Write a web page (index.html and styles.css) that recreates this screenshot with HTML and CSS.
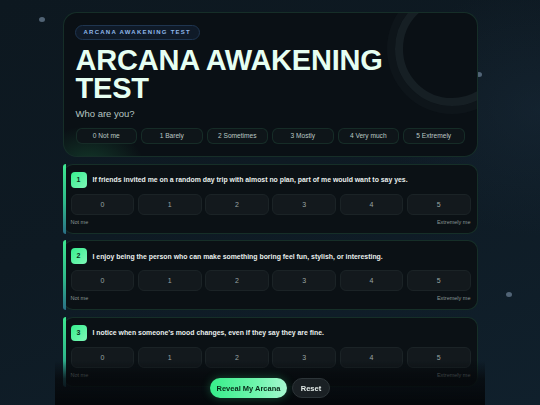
FILE: index.html
```html
<!DOCTYPE html>
<html lang="en">
<head>
<meta charset="utf-8">
<title>Arcana Awakening Test</title>
<link rel="stylesheet" href="styles.css">
</head>
<body>
<span class="dot dot-a"></span>
<span class="dot dot-b"></span>
<span class="dot dot-c"></span>
<main class="page">
  <header class="hero">
    <span class="ring"></span>
    <span class="glow"></span>
    <span class="badge">ARCANA AWAKENING TEST</span>
    <h1 class="title"><span class="line">ARCANA AWAKENING</span><span class="line">TEST</span></h1>
    <p class="sub">Who are you?</p>
    <div class="legend">
      <span class="chip">0 Not me</span>
      <span class="chip">1 Barely</span>
      <span class="chip">2 Sometimes</span>
      <span class="chip">3 Mostly</span>
      <span class="chip">4 Very much</span>
      <span class="chip">5 Extremely</span>
    </div>
  </header>

  <section class="q">
    <div class="q-head"><span class="num">1</span><span class="q-text">If friends invited me on a random day trip with almost no plan, part of me would want to say yes.</span></div>
    <div class="opts"><button class="opt">0</button><button class="opt">1</button><button class="opt">2</button><button class="opt">3</button><button class="opt">4</button><button class="opt">5</button></div>
    <div class="ends"><span>Not me</span><span>Extremely me</span></div>
  </section>

  <section class="q">
    <div class="q-head"><span class="num">2</span><span class="q-text">I enjoy being the person who can make something boring feel fun, stylish, or interesting.</span></div>
    <div class="opts"><button class="opt">0</button><button class="opt">1</button><button class="opt">2</button><button class="opt">3</button><button class="opt">4</button><button class="opt">5</button></div>
    <div class="ends"><span>Not me</span><span>Extremely me</span></div>
  </section>

  <section class="q">
    <div class="q-head"><span class="num">3</span><span class="q-text">I notice when someone’s mood changes, even if they say they are fine.</span></div>
    <div class="opts"><button class="opt">0</button><button class="opt">1</button><button class="opt">2</button><button class="opt">3</button><button class="opt">4</button><button class="opt">5</button></div>
    <div class="ends"><span>Not me</span><span>Extremely me</span></div>
  </section>
</main>
<footer class="bar">
  <button class="btn btn-primary">Reveal My Arcana</button>
  <button class="btn btn-ghost">Reset</button>
</footer>
</body>
</html>
```

FILE: styles.css
```css
* { box-sizing: border-box; }

html, body { height: 100%; }

body {
  margin: 0;
  overflow: hidden;
  font-family: "Liberation Sans", Arial, sans-serif;
  color: #e6f2ee;
  background:
    radial-gradient(ellipse 220px 180px at 540px 110px, rgba(26, 44, 60, 0.45), transparent 70%),
    linear-gradient(160deg, #0d1820 0%, #0e1a23 45%, #10202c 100%);
  position: relative;
}

.dot {
  position: absolute;
  width: 6px;
  height: 5px;
  border-radius: 50%;
  background: #62768a;
  filter: blur(0.6px);
  opacity: 0.8;
}
.dot-a { left: 39px; top: 17px; }
.dot-b { left: 476px; top: 72px; }
.dot-c { left: 506px; top: 292px; }

.page {
  width: 415px;
  margin: 0 auto;
  padding-top: 12px;
  display: flex;
  flex-direction: column;
  gap: 6.6px;
}

/* hero */
.hero {
  position: relative;
  overflow: hidden;
  display: flex;
  flex-direction: column;
  align-items: flex-start;
  border-radius: 14px;
  border: 1px solid rgba(70, 170, 120, 0.2);
  background: #0a1015;
  padding: 12px 11px 12px 11px;
}
.ring {
  position: absolute;
  left: 331px;
  top: -21px;
  width: 114px;
  height: 114px;
  border-radius: 50%;
  border: 8px solid #161f24;
  box-shadow: 0 0 0 8px rgba(22, 32, 38, 0.35);
}
.glow {
  position: absolute;
  left: -30px;
  bottom: -50px;
  width: 110px;
  height: 80px;
  border-radius: 50%;
  background: radial-gradient(closest-side, rgba(40, 150, 90, 0.3), transparent);
}
.badge {
  position: relative;
  display: block;
  height: 15px;
  line-height: 13px;
  padding: 0 8px;
  border-radius: 8px;
  border: 1px solid #1f3550;
  background: #0f1a28;
  color: #8fb8e8;
  font-size: 6px;
  font-weight: 700;
  letter-spacing: 1.25px;
}
.title {
  position: relative;
  margin: 5.5px 0 0 1px;
  font-size: 29px;
  line-height: 28px;
  font-weight: 700;
  color: #e6fff2;
  letter-spacing: -0.2px;
}
.line { display: block; }
.sub {
  position: relative;
  margin: 6px 0 0 1px;
  font-size: 9.5px;
  line-height: 12px;
  color: #b7c6c2;
}
.legend {
  position: relative;
  align-self: stretch;
  margin: 8.5px 1px 0 1px;
  display: grid;
  grid-template-columns: repeat(6, 1fr);
  gap: 4px;
}
.chip {
  height: 16px;
  line-height: 14px;
  text-align: center;
  border-radius: 6px;
  border: 1px solid rgba(70, 170, 120, 0.16);
  background: #0e1519;
  color: #bcc8c5;
  font-size: 6.6px;
}

/* question cards */
.q {
  position: relative;
  height: 70px;
  flex: none;
  border-radius: 10px;
  border: 1px solid rgba(70, 170, 120, 0.2);
  background: #0b1115;
  padding: 7px 6px 0 7px;
}
.q::before {
  content: "";
  position: absolute;
  left: -1px;
  top: -1px;
  bottom: -1px;
  width: 3px;
  border-radius: 10px 0 0 10px;
  background: linear-gradient(180deg, #3ee890 0%, #2fb98a 55%, #2a6f86 100%);
}
.q-head {
  display: flex;
  align-items: center;
  gap: 6px;
}
.num {
  flex: none;
  width: 16px;
  height: 16px;
  border-radius: 4px;
  background: linear-gradient(135deg, #36ef8e, #7ff7b8);
  color: #07301a;
  font-size: 7px;
  font-weight: 700;
  line-height: 16px;
  text-align: center;
}
.q-text {
  font-size: 6.9px;
  font-weight: 700;
  color: #e9efed;
  white-space: nowrap;
}
.opts {
  margin-top: 6px;
  display: grid;
  grid-template-columns: repeat(6, 1fr);
  gap: 3.5px;
}
.opt {
  height: 21px;
  border-radius: 6px;
  border: 1px solid #1b2326;
  background: #13191d;
  color: #9ba6a4;
  font-family: "Liberation Sans", Arial, sans-serif;
  font-size: 7px;
  padding: 0;
}
.ends {
  margin-top: 4px;
  display: flex;
  justify-content: space-between;
  font-size: 5.5px;
  line-height: 7px;
  color: #8a9694;
}

/* footer */
.bar {
  position: fixed;
  bottom: 0;
  left: 55px;
  width: 430px;
  height: 44px;
  padding-bottom: 7px;
  display: flex;
  justify-content: center;
  align-items: flex-end;
  gap: 5px;
  background: linear-gradient(180deg, rgba(6, 9, 12, 0) 0%, rgba(6, 9, 12, 0.75) 40%, #05080b 100%);
}
.btn {
  height: 20px;
  border-radius: 10px;
  font-family: "Liberation Sans", Arial, sans-serif;
  font-size: 7.5px;
  font-weight: 700;
  padding: 0;
}
.btn-primary {
  width: 77px;
  border: none;
  color: #072a18;
  background: linear-gradient(90deg, #37ee8a 0%, #6ff5ad 60%, #a6f8d0 100%);
  box-shadow: 0 0 10px rgba(60, 230, 140, 0.3);
}
.btn-ghost {
  width: 38px;
  border: 1px solid #2c3438;
  background: #1a2024;
  color: #e3ebe9;
}
```
